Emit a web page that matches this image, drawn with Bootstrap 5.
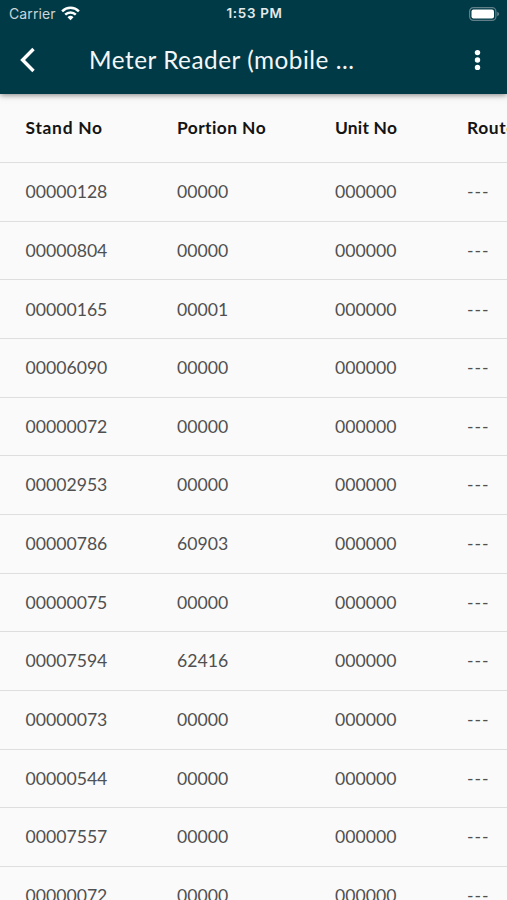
<!DOCTYPE html>
<html lang="en">
<head>
<meta charset="utf-8">
<meta name="viewport" content="width=device-width, initial-scale=1">
<title>Meter Reader</title>
<link href="https://cdn.jsdelivr.net/npm/bootstrap@5.3.0/dist/css/bootstrap.min.css" rel="stylesheet">
<style>
body{font-family:Lato,sans-serif;background:#fafafa;height:900px}
.app-top{background:#013a47;height:93.5px;box-shadow:0 1px 6px rgba(0,0,0,.5);z-index:2}
.status-bar{height:27px;padding:0 7px 0 9px;font-family:Inter,sans-serif;font-size:14px;line-height:27px}
.status-bar>div{flex:1 1 0}
.carrier{color:#c9d5d9;letter-spacing:.12px}
.clock{font-size:13.4px;font-weight:600;letter-spacing:.7px;color:#e3eaec}
.title-bar{height:66px;padding:0 24px 0 19px}
.page-title{font-size:24.3px;line-height:66px;margin-left:53px;letter-spacing:.53px;color:#f3f7f8;font-weight:400}
.icon-btn{line-height:0}
.grid-row{display:grid;grid-template-columns:151.5px 158px 132px 65px;padding-left:25.5px;height:58.65px;border-bottom:1.5px solid #dedede;align-items:center;font-size:17.65px;color:#505050;white-space:nowrap}
.grid-row>span{padding-top:1px}
.grid-row>span:last-child{overflow:hidden}
.grid-head{height:69.7px;font-weight:700;font-size:17.4px;color:#141414;letter-spacing:.2px}
.grid-head>span{padding-top:0}
.head-stand{letter-spacing:.72px}
.head-portion{letter-spacing:.42px}
.head-route{letter-spacing:.6px}
.dashes{letter-spacing:1px}
</style>
</head>
<body class="overflow-hidden">
<header class="app-top position-relative">
  <div class="status-bar d-flex align-items-center">
    <div class="d-flex align-items-center"><span class="carrier">Carrier</span>
      <svg class="ms-1" width="21" height="15" viewBox="0 0 20 15" fill="none" stroke="#fff" stroke-width="2.5"><path d="M1.6 5.3a12 12 0 0 1 16.8 0M4.7 8.7a7.5 7.5 0 0 1 10.6 0"/><path d="M10 14.2 7 11.2a4.3 4.3 0 0 1 6 0z" fill="#fff" stroke="none"/></svg></div>
    <div class="clock text-center">1:53 PM</div>
    <div class="d-flex justify-content-end"><svg width="31" height="14" viewBox="0 0 31 14"><rect x=".6" y=".6" width="26.3" height="12.8" rx="3.8" fill="#013a47" stroke="#607f89" stroke-width="1.2"/><rect x="2.5" y="2.5" width="22.5" height="9" rx="2" fill="#fff"/><path d="M28.2 4.8q2 .7 2 2.2t-2 2.2z" fill="#607f89"/></svg></div>
  </div>
  <div class="title-bar d-flex align-items-center">
    <a class="icon-btn" href="#" aria-label="Back"><svg width="17" height="26" viewBox="0 0 17 26" fill="none" stroke="#fff" stroke-width="3.4"><path d="M14.5 2 3.6 13l10.9 11"/></svg></a>
    <h1 class="page-title mb-0 me-auto">Meter Reader (mobile ...</h1>
    <a class="icon-btn" href="#" aria-label="More"><svg width="11" height="22" viewBox="0 0 11 22" fill="#fff"><circle cx="5.5" cy="3.6" r="2.7"/><circle cx="5.5" cy="11" r="2.7"/><circle cx="5.5" cy="18.4" r="2.7"/></svg></a>
  </div>
</header>
<main id="rows">
  <div class="grid-row grid-head"><span class="head-stand">Stand No</span><span class="head-portion">Portion No</span><span>Unit No</span><span class="head-route">Route</span></div>
</main>
<script src="https://cdn.jsdelivr.net/npm/bootstrap@5.3.0/dist/js/bootstrap.bundle.min.js"></script>
<script>
const stands=[['00000128'],['00000804'],['00000165','00001'],['00006090'],['00000072'],['00002953'],['00000786','60903'],['00000075'],['00007594','62416'],['00000073'],['00000544'],['00007557'],['00000072']];
document.getElementById('rows').insertAdjacentHTML('beforeend',stands.map(([s,p='00000'])=>`<div class="grid-row"><span>${s}</span><span>${p}</span><span>000000</span><span class="dashes">---</span></div>`).join(''));
</script>
</body>
</html>
